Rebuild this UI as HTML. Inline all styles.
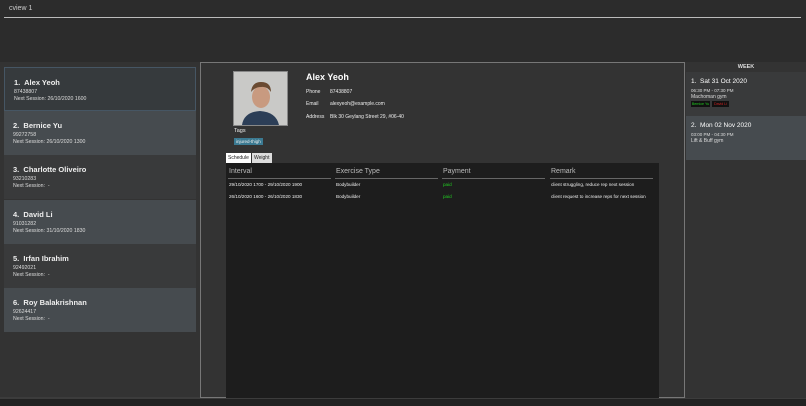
<!DOCTYPE html>
<html><head><style>
*{margin:0;padding:0;box-sizing:border-box}
body{width:806px;height:406px;background:#333;font-family:"Liberation Sans",sans-serif;color:#fff;position:relative;overflow:hidden;white-space:nowrap}
.a{position:absolute}
.card{position:absolute;left:4px;width:192px;height:44px;padding:10px 0 0 9px}
.card .n{font-size:7.5px;font-weight:bold;color:#eee;line-height:9px}
.card .s{font-size:5.2px;color:#ddd;margin-top:2px;line-height:7px}
.odd{background:#393a3b}
.even{background:#464b4f}
.t{font-size:5px;color:#eee}
.w div{line-height:7px}
</style></head><body>
<div class="a" style="left:0;top:0;width:806px;height:62px;background:#2c2c2c"></div>
<div class="a" style="left:9px;top:5px;font-size:7px;color:#ccc">cview 1</div>
<div class="a" style="left:4px;top:17px;width:797px;height:1px;background:#bbb"></div>
<div class="a" style="left:0;top:398px;width:806px;height:8px;background:#222"></div>
<div class="a" style="left:0;top:397px;width:806px;height:2px;background:#3c3c3c"></div>

<div class="card odd" style="top:67px;border:1px solid #465664;background:#363a3d"><div class="n">1.&nbsp; Alex Yeoh</div><div class="s">87438807<br>Next Session: 26/10/2020 1600</div></div>
<div class="card even" style="top:111px"><div class="n">2.&nbsp; Bernice Yu</div><div class="s">99272758<br>Next Session: 26/10/2020 1300</div></div>
<div class="card odd" style="top:155px"><div class="n">3.&nbsp; Charlotte Oliveiro</div><div class="s">93210283<br>Next Session:&nbsp; -</div></div>
<div class="card even" style="top:200px"><div class="n">4.&nbsp; David Li</div><div class="s">91031282<br>Next Session: 31/10/2020 1830</div></div>
<div class="card odd" style="top:244px"><div class="n">5.&nbsp; Irfan Ibrahim</div><div class="s">92492021<br>Next Session:&nbsp; -</div></div>
<div class="card even" style="top:288px"><div class="n">6.&nbsp; Roy Balakrishnan</div><div class="s">92624417<br>Next Session:&nbsp; -</div></div>

<div class="a" style="left:200px;top:62px;width:485px;height:336px;border:1px solid #777;background:#333"></div>
<div class="a" style="left:233px;top:71px;width:55px;height:55px;background:#c9c9c7;border:1px solid #888">
<svg width="53" height="53" viewBox="0 0 53 53"><path d="M8 53 Q10 40 26 39 Q42 40 45 53Z" fill="#2c3e57"/><ellipse cx="27" cy="25" rx="9" ry="11" fill="#c89a80"/><path d="M17 20 Q18 10 27 10 Q37 10 37 20 Q33 14 27 15 Q21 15 17 20Z" fill="#6a4a32"/></svg></div>
<div class="a t" style="left:234px;top:128px;font-size:5.5px">Tags</div>
<div class="a" style="left:234px;top:138px;background:#3b7a92;font-size:4.5px;padding:1px 2px;color:#eee">injured-thigh</div>
<div class="a" style="left:306px;top:72px;font-size:9px;font-weight:bold">Alex Yeoh</div>
<div class="a t" style="left:306px;top:89px">Phone</div><div class="a t" style="left:330px;top:89px">87438807</div>
<div class="a t" style="left:306px;top:101px">Email</div><div class="a t" style="left:330px;top:101px">alexyeoh@example.com</div>
<div class="a t" style="left:306px;top:114px">Address</div><div class="a t" style="left:330px;top:114px">Blk 30 Geylang Street 29, #06-40</div>
<div class="a" style="left:226px;top:153px;width:25px;height:10px;background:#fff;color:#222;font-size:5px;padding:2px 2px">Schedule</div>
<div class="a" style="left:252px;top:153px;width:20px;height:10px;background:#ddd;color:#222;font-size:5px;padding:2px 2px">Weight</div>
<div class="a" style="left:226px;top:163px;width:433px;height:235px;background:#1d1d1d"></div>
<div class="a" style="left:229px;top:168px;font-size:7px;color:#bbb">Interval</div>
<div class="a" style="left:336px;top:168px;font-size:7px;color:#bbb">Exercise Type</div>
<div class="a" style="left:443px;top:168px;font-size:7px;color:#bbb">Payment</div>
<div class="a" style="left:551px;top:168px;font-size:7px;color:#bbb">Remark</div>
<div class="a" style="left:228px;top:178px;width:103px;height:1px;background:#666"></div>
<div class="a" style="left:335px;top:178px;width:103px;height:1px;background:#666"></div>
<div class="a" style="left:442px;top:178px;width:103px;height:1px;background:#666"></div>
<div class="a" style="left:550px;top:178px;width:103px;height:1px;background:#666"></div>
<div class="a t" style="left:229px;top:182px;font-size:4.6px">29/10/2020 1700 - 29/10/2020 1900</div>
<div class="a t" style="left:336px;top:182px;font-size:4.6px">Bodybuilder</div>
<div class="a" style="left:443px;top:182px;font-size:4.6px;color:#2c2">paid</div>
<div class="a t" style="left:551px;top:182px;font-size:4.6px">client struggling, reduce rep next session</div>
<div class="a t" style="left:229px;top:194px;font-size:4.6px">26/10/2020 1600 - 26/10/2020 1830</div>
<div class="a t" style="left:336px;top:194px;font-size:4.6px">Bodybuilder</div>
<div class="a" style="left:443px;top:194px;font-size:4.6px;color:#2c2">paid</div>
<div class="a t" style="left:551px;top:194px;font-size:4.6px">client request to increase reps for next session</div>

<div class="a" style="left:686px;top:62px;width:120px;height:336px;background:#333"></div>
<div class="a" style="left:686px;top:64px;width:120px;text-align:center;font-size:5.5px;font-weight:bold;color:#ddd">WEEK</div>
<div class="a w" style="left:686px;top:72px;width:120px;height:44px;background:#393a3b;padding:6px 0 0 5px">
<div style="font-size:6.5px;line-height:8px">1.&nbsp; Sat 31 Oct 2020</div>
<div style="font-size:4.5px;color:#ddd;margin-top:1px">06:30 PM - 07:30 PM</div>
<div style="font-size:5px;color:#ddd">Machoman gym</div>
<div style="position:relative;height:6px"><span style="position:absolute;left:0;top:0;width:19px;height:6px;background:#111;color:#2c2;font-size:3.6px;line-height:6px;text-align:center;overflow:hidden">Bernice Yu</span><span style="position:absolute;left:21px;top:0;width:17px;height:6px;background:#111;color:#c22;font-size:3.6px;line-height:6px;text-align:center;overflow:hidden">David Li</span></div></div>
<div class="a w" style="left:686px;top:116px;width:120px;height:44px;background:#464b4f;padding:6px 0 0 5px">
<div style="font-size:6.5px;line-height:8px">2.&nbsp; Mon 02 Nov 2020</div>
<div style="font-size:4.5px;color:#ddd;margin-top:1px">03:00 PM - 04:30 PM</div>
<div style="font-size:5px;color:#ddd">Lift &amp; Buff gym</div></div>
</body></html>
